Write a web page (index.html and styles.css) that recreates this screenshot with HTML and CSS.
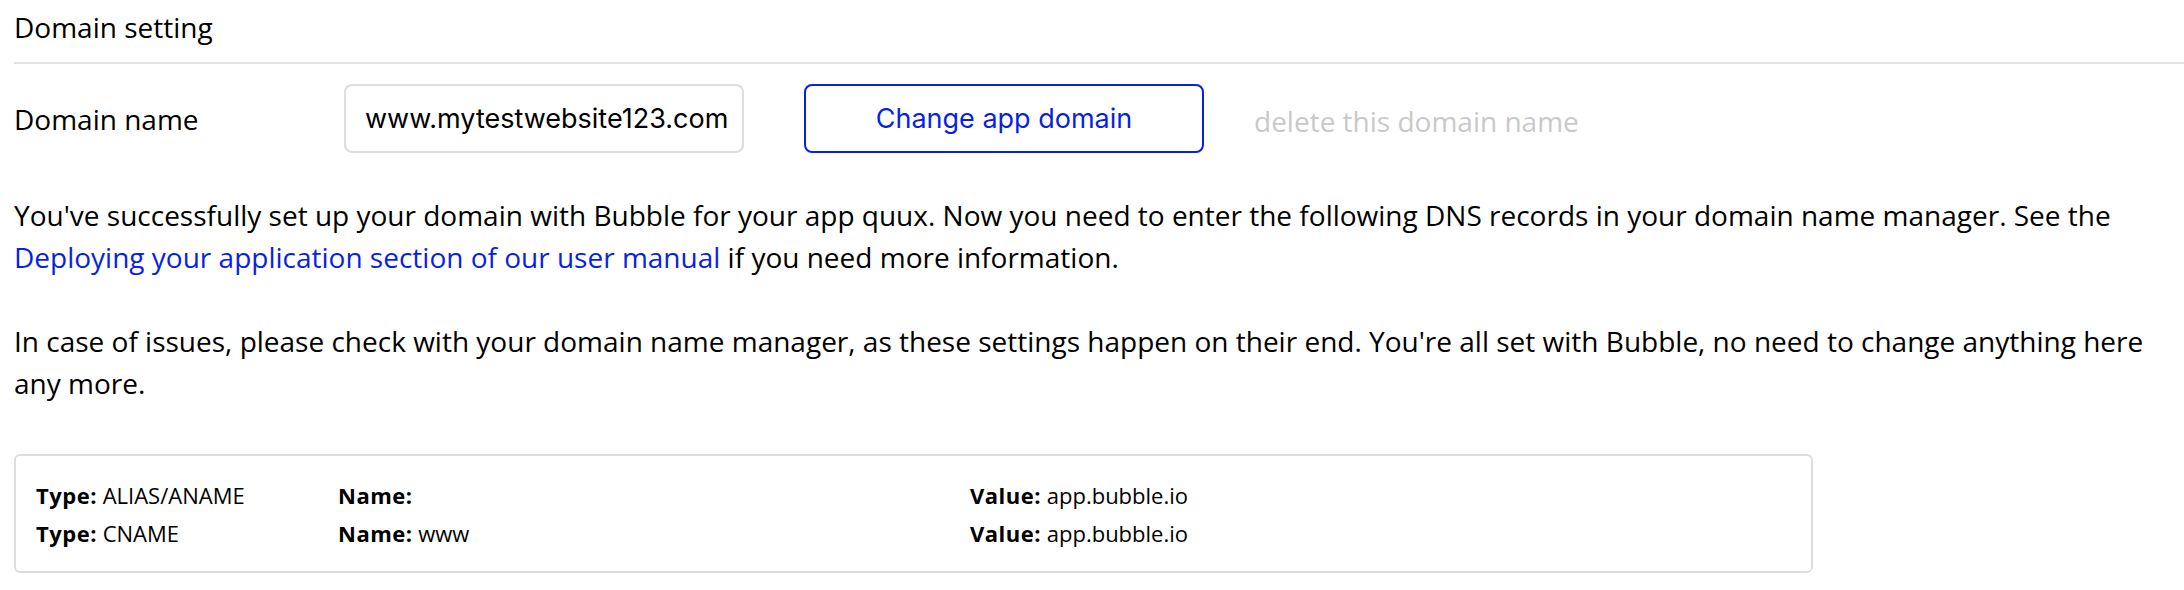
FILE: index.html
```html
<!DOCTYPE html>
<html lang="en">
<head>
<meta charset="utf-8">
<title>Domain setting</title>
<link rel="stylesheet" href="styles.css">
</head>
<body>
<div class="page">
  <div class="title">Domain setting</div>
  <div class="divider"></div>
  <div class="domain-row">
    <label class="label" for="domain">Domain name</label>
    <input class="input" id="domain" type="text" value="www.mytestwebsite123.com">
    <button class="btn" type="button">Change app domain</button>
    <span class="delete">delete this domain name</span>
  </div>
  <p class="text first">You've successfully set up your domain with Bubble for your app quux. Now you need to enter the following DNS records in your domain name manager. See the <a class="link" href="#">Deploying your application section of our user manual</a> if you need more information.</p>
  <p class="text">In case of issues, please check with your domain name manager, as these settings happen on their end. You're all set with Bubble, no need to change anything here any more.</p>
  <div class="dns">
    <div class="cell"><b>Type:</b> ALIAS/ANAME</div>
    <div class="cell"><b>Name:</b></div>
    <div class="cell"><b>Value:</b> app.bubble.io</div>
    <div class="cell"><b>Type:</b> CNAME</div>
    <div class="cell"><b>Name:</b> www</div>
    <div class="cell"><b>Value:</b> app.bubble.io</div>
  </div>
</div>
</body>
</html>
```

FILE: styles.css
```css
html, body {
  margin: 0;
  padding: 0;
  background: #ffffff;
}

body {
  font-family: "Open Sans", "Noto Sans", sans-serif;
  font-size: 28px;
  line-height: 42px;
  color: #000000;
}

.page {
  padding: 6px 0 20px 14px;
}

.title {
  line-height: 42px;
}

.divider {
  margin-top: 14px;
  height: 2px;
  background: #e2e2e2;
}

.domain-row {
  margin-top: 20px;
  display: flex;
  align-items: center;
}

.label {
  width: 330px;
  flex: none;
}

.input {
  box-sizing: border-box;
  width: 400px;
  height: 69px;
  border: 2px solid #dddddd;
  border-radius: 8px;
  padding: 0 0 0 19px;
  font-family: "Inter", "Liberation Sans", sans-serif;
  font-size: 27px;
  color: #000000;
  background: #ffffff;
  outline: none;
}

.btn {
  box-sizing: border-box;
  margin-left: 60px;
  width: 400px;
  height: 69px;
  border: 2px solid #0a1fe6;
  border-radius: 8px;
  background: #ffffff;
  color: #0a1fe6;
  font-family: "Inter", "Liberation Sans", sans-serif;
  font-size: 27px;
  padding: 0;
  cursor: pointer;
}

.delete {
  margin-left: 50px;
  padding-top: 4px;
  font-size: 28px;
  color: #c9c9c9;
}

.text {
  margin: 42px 0 0 0;
}

.text.first {
  margin-top: 41px;
}

.link {
  color: #0a1fe6;
  text-decoration: none;
}

.dns {
  margin-top: 50px;
  width: 1799px;
  box-sizing: border-box;
  border: 2px solid #dddddd;
  border-radius: 6px;
  padding: 20px 20px 19px 20px;
  display: grid;
  grid-template-columns: 302px 632px 1fr;
  font-size: 22px;
  line-height: 38px;
}

.cell b {
  font-weight: 700;
  letter-spacing: 0.5px;
}
```
